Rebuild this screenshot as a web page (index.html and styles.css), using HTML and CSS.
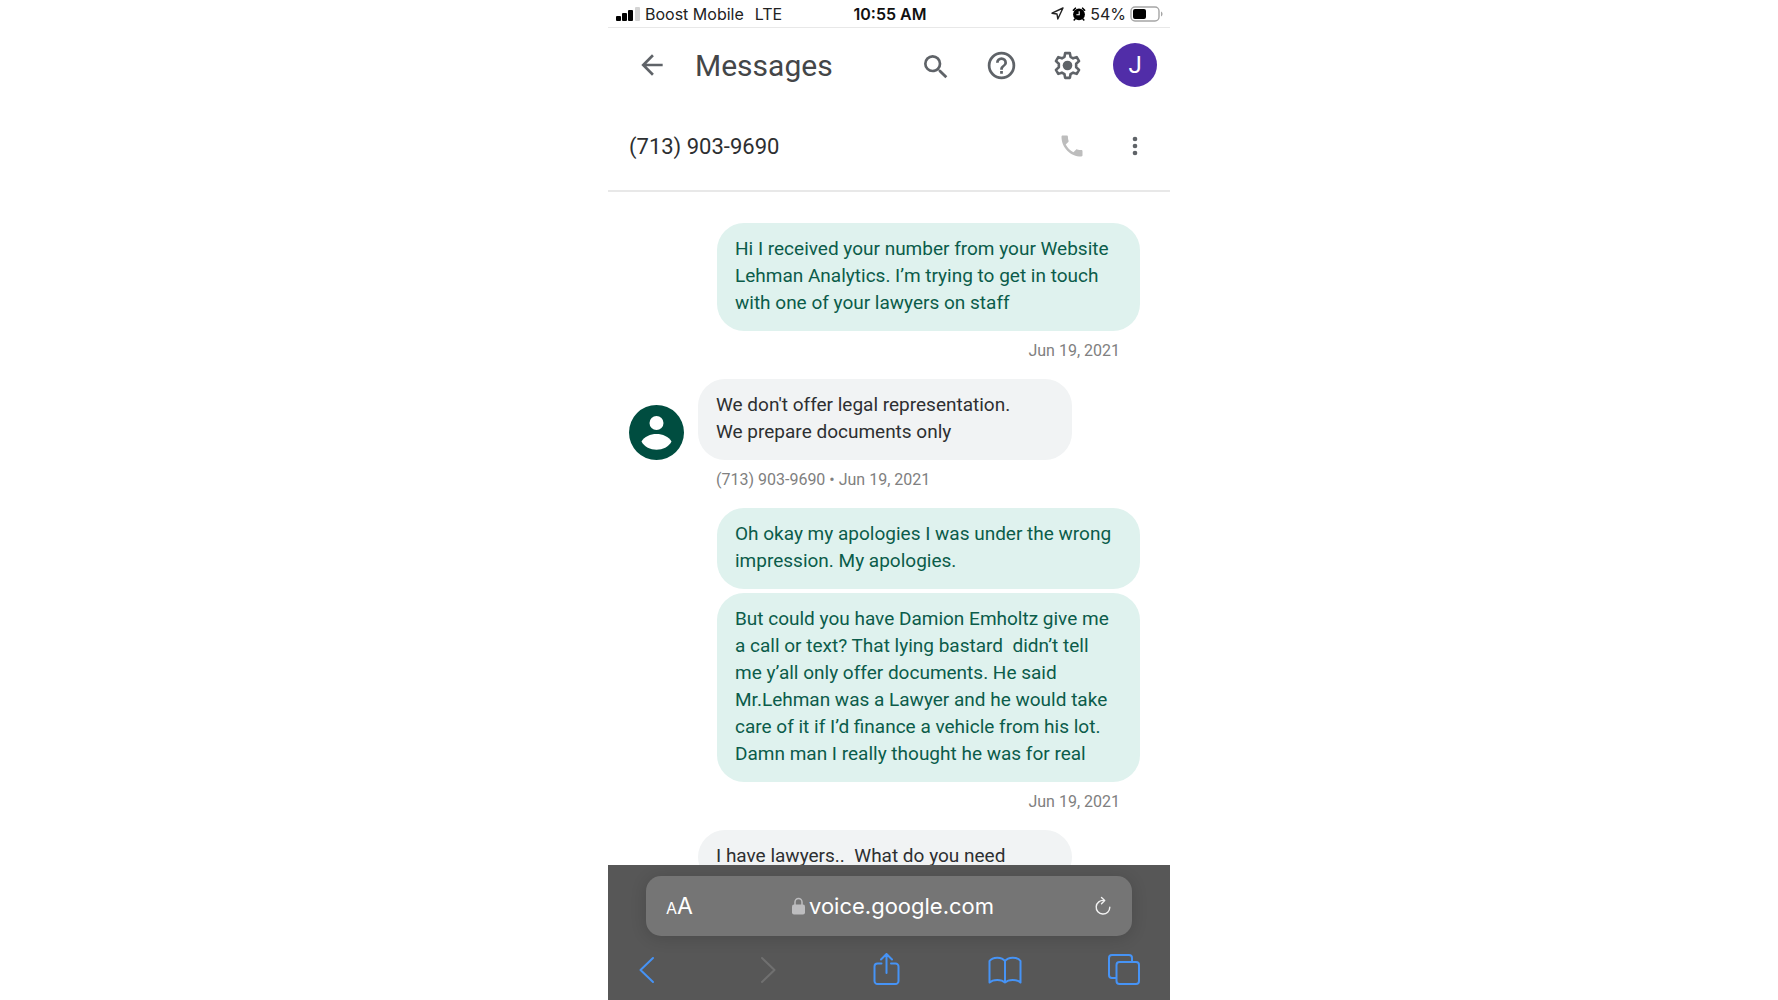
FILE: index.html
```html
<!DOCTYPE html>
<html lang="en">
<head>
    <meta charset="UTF-8">
    <meta name="viewport" content="width=device-width, initial-scale=1.0">
    <title>Messages</title>
    <link rel="stylesheet" href="styles.css">
</head>
<body>
    <div class="phone">
        <!-- Phone status bar -->
        <div class="status-bar">
            <div class="carrier">
                <svg width="24" height="14" viewBox="0 0 24 14">
                    <rect x="0" y="9" width="5" height="5" rx="1"/>
                    <rect x="6" y="6" width="5" height="8" rx="1"/>
                    <rect x="12" y="3" width="5" height="11" rx="1"/>
                    <rect x="19" y="0" width="5" height="14" rx="1" fill="#d4d4d4"/>
                </svg>
                <span>Boost Mobile</span>
                <span class="network">LTE</span>
            </div>
            <strong class="clock">10:55 AM</strong>
            <div class="battery">
                <svg width="13" height="13" viewBox="0 0 13 13"><path d="M12 1 1 6.2l5 .8.8 5z" fill="none" stroke="#222" stroke-width="1.4" stroke-linejoin="round"/></svg>
                <svg class="alarm" width="14" height="14" viewBox="0 0 14 14">
                    <circle cx="7" cy="7.4" r="5.9"/>
                    <path d="M1.400 3.200 3.400 1.200M12.600 3.200 10.600 1.200M3 12l-.8 1M11 12l.8 1" stroke="#000" stroke-width="1.6" stroke-linecap="round"/>
                    <path d="M7.2 4.2v3.5H4.4" fill="none" stroke="#fff" stroke-width="1.1"/>
                </svg>
                <span>54%</span>
                <svg width="34" height="16" viewBox="0 0 34 16">
                    <rect x="1" y="1" width="28" height="14" rx="4" fill="none" stroke="#a5a5a5" stroke-width="1.4"/>
                    <rect x="3" y="3" width="13" height="10" rx="2"/>
                    <path d="M31 5.5c2 .8 2 4.200 0 5z" fill="#a5a5a5"/>
                </svg>
            </div>
        </div>

        <!-- App header -->
        <header class="app-bar">
            <button type="button" class="icon-button" aria-label="Back">
                <svg width="32" height="32" viewBox="0 0 24 24"><path d="M20 11H7.800l5.600-5.600L12 4l-8 8 8 8 1.400-1.400L7.800 13H20z"/></svg>
            </button>
            <h1>Messages</h1>
            <button type="button" class="icon-button" aria-label="Search">
                <svg class="search-icon" width="32" height="32" viewBox="0 0 24 24"><path d="M15.500 14h-.79l-.28-.27A6.470 6.470 0 0 0 16 9.500 6.500 6.500 0 1 0 9.500 16c1.610 0 3.090-.59 4.230-1.570l.27.28v.79l5 4.990L20.490 19zm-6 0a4.500 4.500 0 1 1 0-9 4.500 4.500 0 0 1 0 9z"/></svg>
            </button>
            <button type="button" class="icon-button" aria-label="Help">
                <svg width="33" height="33" viewBox="0 0 24 24"><path d="M11 18h2v-2h-2zm1-16a10 10 0 1 0 0 20 10 10 0 0 0 0-20zm0 18a8 8 0 1 1 0-16 8 8 0 0 1 0 16zm0-14a4 4 0 0 0-4 4h2a2 2 0 1 1 4 0c0 2-3 1.750-3 5h2c0-2.250 3-2.500 3-5a4 4 0 0 0-4-4z"/></svg>
            </button>
            <button type="button" class="icon-button" aria-label="Settings">
                <svg width="33" height="33" viewBox="0 0 24 24">
                    <path d="M10.300 3h3.400l.5 2.700 1.900 1.100 2.600-.9 1.700 2.900-2.100 1.900v2.600l2.100 1.900-1.700 2.900-2.600-.9-1.900 1.100-.5 2.700h-3.400l-.5-2.700-1.900-1.100-2.600.9-1.700-2.900 2.100-1.900v-2.600L3.600 8.800l1.700-2.900 2.600.9 1.900-1.100z" fill="none" stroke="#5f6368" stroke-width="1.900" stroke-linejoin="round"/>
                    <circle cx="12" cy="12" r="3.500"/>
                </svg>
            </button>
            <button type="button" class="account" aria-label="Account">J</button>
        </header>

        <div class="contact-bar">
            <h2>(713) 903-9690</h2>
            <button type="button" class="icon-button call" aria-label="Call">
                <svg width="28" height="28" viewBox="0 0 24 24"><path d="M6.620 10.790c1.440 2.830 3.760 5.140 6.590 6.590l2.200-2.200c.27-.27.67-.36 1.020-.24 1.120.37 2.330.57 3.570.57.550 0 1 .45 1 1V20c0 .55-.45 1-1 1C10.610 21 3 13.390 3 4c0-.55.45-1 1-1h3.500c.55 0 1 .45 1 1 0 1.250.2 2.450.57 3.570.11.35.03.74-.25 1.020z"/></svg>
            </button>
            <button type="button" class="icon-button" aria-label="More options">
                <svg width="28" height="28" viewBox="0 0 24 24"><circle cx="12" cy="6" r="2"/><circle cx="12" cy="12" r="2"/><circle cx="12" cy="18" r="2"/></svg>
            </button>
        </div>

        <!-- Conversation -->
        <main class="thread">
            <p class="bubble sent">Hi I received your number from your Website Lehman Analytics. I’m trying to get in touch with one of your lawyers on staff</p>
            <div class="meta meta-sent">Jun 19, 2021</div>

            <div class="received-row">
                <svg class="avatar" width="55" height="55" viewBox="0 0 55 55">
                    <circle cx="27.500" cy="27.500" r="27.500" fill="#004d40"/>
                    <circle cx="27.500" cy="18" r="7" fill="#fff"/>
                    <path d="M12.500 36.500C18 26.500 37 26.500 42.500 36.500C37 47.500 18 47.500 12.500 36.500z" fill="#fff"/>
                </svg>
                <p class="bubble received">We don't offer legal representation.
We prepare documents only</p>
            </div>
            <div class="meta meta-received">(713) 903-9690 • Jun 19, 2021</div>

            <p class="bubble sent">Oh okay my apologies I was under the wrong impression. My apologies.</p>
            <p class="bubble sent">But could you have Damion Emholtz give me a call or text? That lying bastard  didn’t tell me y’all only offer documents. He said Mr.Lehman was a Lawyer and he would take care of it if I’d finance a vehicle from his lot. Damn man I really thought he was for real</p>
            <div class="meta meta-sent">Jun 19, 2021</div>

            <div class="received-row">
                <p class="bubble received">I have lawyers..  What do you need</p>
            </div>
        </main>

        <!-- Browser controls -->
        <footer class="browser-bar">
            <div class="address-bar">
                <button type="button" class="text-size" aria-label="Text size"><small>A</small>A</button>
                <label class="address">
                    <svg width="13" height="18" viewBox="0 0 13 18"><path d="M3 8V5a3.500 3.500 0 0 1 7 0v3" fill="none" stroke="#bdbdbf" stroke-width="1.500"/><rect x="0" y="7.500" width="13" height="10" rx="2" fill="#bdbdbf"/></svg>
                    <input type="text" value="voice.google.com" aria-label="Address">
                </label>
                <button type="button" class="reload" aria-label="Reload">
                    <svg width="18" height="20" viewBox="0 0 18 20" fill="none" stroke="#f2f2f2" stroke-width="1.400" stroke-linecap="round" stroke-linejoin="round"><path d="M10 4.500a6.800 6.800 0 1 0 5.800 6.700M7.500 1.500l3.200 3-3.200 3.200"/></svg>
                </button>
            </div>
            <nav class="toolbar">
                <button type="button" aria-label="Previous page"><svg width="34" height="34" viewBox="0 0 34 34"><path d="M23 5 10.500 17 23 29"/></svg></button>
                <button type="button" class="disabled" aria-label="Next page" disabled><svg width="34" height="34" viewBox="0 0 34 34"><path d="M13 5l12.500 12L13 29"/></svg></button>
                <button type="button" aria-label="Share"><svg width="34" height="34" viewBox="0 0 34 34"><path d="M12.500 10.500H8.500a3 3 0 0 0-3 3V28a3 3 0 0 0 3 3h18a3 3 0 0 0 3-3V13.500a3 3 0 0 0-3-3H22M17.500 20V1M12 6.500l5.500-5.500 5.500 5.500"/></svg></button>
                <button type="button" aria-label="Bookmarks"><svg width="34" height="34" viewBox="0 0 34 34"><path d="M17 8C14 3.500 4.500 3.500 1.500 8v21.500c3.500-3.500 12-3.500 15.500 0 3.500-3.500 12-3.500 15.500 0V8C29.500 3.500 20 3.500 17 8zM17 8v21.500"/></svg></button>
                <button type="button" aria-label="Tabs"><svg width="34" height="34" viewBox="0 0 34 34"><rect x="9.500" y="9" width="22.500" height="22" rx="3"/><path d="M9 25H5a3 3 0 0 1-3-3V5a3 3 0 0 1 3-3h17a3 3 0 0 1 3 3v3.500"/></svg></button>
            </nav>
        </footer>
    </div>
</body>
</html>
```
FILE: styles.css
```css
/* Global Styles */
* {
    box-sizing: border-box;
}

body {
    font-family: Roboto, sans-serif;
    background-color: #fff;
    color: #2d2f31;
    margin: 0;
}

h1, h2, p {
    margin: 0;
    font-weight: 400;
}

button {
    font: inherit;
    color: inherit;
    background: none;
    border: none;
    padding: 0;
    cursor: pointer;
}

svg {
    display: block;
    flex: none;
}

.phone {
    display: flex;
    flex-direction: column;
    height: 100vh;
    max-width: 562px;
    margin: 0 auto;
    overflow: hidden;
}

/* Status bar */
.status-bar {
    display: grid;
    grid-template-columns: 1fr auto 1fr;
    align-items: center;
    flex: none;
    height: 28px;
    padding: 0 6px 0 8px;
    border-bottom: 1px solid #e8e8e8;
    font-family: Inter, sans-serif;
    font-size: 16px;
    color: #222;
}

.carrier, .battery {
    display: flex;
    align-items: center;
    gap: 5px;
}

.network {
    margin-left: 6px;
}

.battery {
    justify-content: flex-end;
    gap: 4px;
}

.alarm {
    margin-left: 4px;
}

.clock {
    font-weight: 600;
    color: #111;
}

/* Headers */
.app-bar {
    display: flex;
    align-items: center;
    flex: none;
    height: 74px;
    padding: 0 13px 0 21px;
    gap: 21px;
}

.app-bar h1 {
    flex: 1;
    font-size: 30px;
    color: #444648;
}

.icon-button {
    display: flex;
    align-items: center;
    justify-content: center;
    width: 45px;
    height: 45px;
    fill: #5f6368;
}

.search-icon {
    margin-top: 4px;
}

.account {
    width: 44px;
    height: 44px;
    margin-left: 2px;
    border-radius: 50%;
    background-color: #512da8;
    color: #fff;
    font-size: 24px;
}

.contact-bar {
    display: flex;
    align-items: center;
    flex: none;
    height: 90px;
    padding: 0 13px 0 21px;
    gap: 18px;
    border-bottom: 2px solid #e8e8e8;
}

.contact-bar h2 {
    flex: 1;
    font-size: 22px;
}

.call {
    fill: #bdbdbd;
}

/* Conversation */
.thread {
    display: flex;
    flex-direction: column;
    flex: 1;
    min-height: 0;
    overflow: hidden;
    padding: 31px 30px 0 21px;
}

.bubble {
    padding: 12px 22px 15px 18px;
    border-radius: 27px;
    font-size: 19px;
    line-height: 27px;
    white-space: pre-wrap;
}

.sent {
    align-self: flex-end;
    width: 423px;
    background-color: #dff2ee;
    color: #0b5c4a;
}

.sent + .sent {
    margin-top: 4px;
}

.received-row {
    display: flex;
    align-items: flex-end;
}

.received {
    width: 374px;
    margin-left: auto;
    margin-right: 68px;
    background-color: #f1f3f4;
}

.meta {
    margin-bottom: 9px;
    font-size: 16px;
    line-height: 39px;
    color: #808080;
}

.meta-sent {
    padding-right: 20px;
    text-align: right;
}

.meta-received {
    padding-left: 87px;
}

/* Browser controls */
.browser-bar {
    flex: none;
    height: 135px;
    padding: 11px 38px 0;
    background-color: #575757;
    font-family: Inter, sans-serif;
    color: #fff;
}

.address-bar {
    display: flex;
    align-items: center;
    justify-content: space-between;
    height: 60px;
    padding: 0 20px;
    border-radius: 15px;
    background-color: #757575;
    box-shadow: 0 2px 16px rgba(0, 0, 0, 0.15);
}

.text-size {
    font-size: 23px;
}

.text-size small {
    font-size: 16px;
}

.address {
    display: flex;
    align-items: center;
    gap: 4px;
}

.address input {
    width: 186px;
    padding: 0;
    border: none;
    outline: none;
    background: none;
    font: inherit;
    font-size: 22px;
    color: inherit;
}

.toolbar {
    display: flex;
    justify-content: space-between;
    margin: 17px -9px 0 -16px;
}

.toolbar svg {
    fill: none;
    stroke: #4693f5;
    stroke-width: 2;
    stroke-linecap: round;
    stroke-linejoin: round;
}

.toolbar .disabled svg {
    stroke: #707070;
}
```
